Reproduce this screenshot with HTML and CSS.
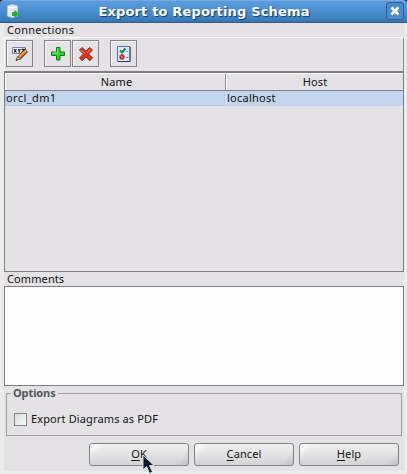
FILE: index.html
```html
<!DOCTYPE html>
<html lang="en">
<head>
<meta charset="utf-8">
<title>Export to Reporting Schema</title>
<link rel="stylesheet" href="styles.css">
</head>
<body>
<div class="window">
  <header class="titlebar">
    <svg class="app-icon" width="16" height="18" viewBox="0 0 16 18">
      <path d="M1.500 4Q6 1 11.500 4V14Q6 17 1.500 14Z" fill="#e3e9e8" stroke="#b5cbd9"/>
      <path d="M2 5Q6 7 11 5M2 9Q5 11 8 9" fill="none" stroke="#fff"/>
      <path d="M6 10h2.500V7.500l4.500 4.500-4.500 4.500V14H6z" fill="#2eae3a"/>
    </svg>
    <h1>Export to Reporting Schema</h1>
    <button class="close" aria-label="Close">
      <svg width="10" height="10" viewBox="0 0 10 10"><path d="M1.500 1.500L8.500 8.500M8.500 1.500L1.500 8.500" stroke="#fff" stroke-width="2.600"/></svg>
    </button>
  </header>
  <main class="content">
    <div class="label"><span class="t-connections">Connections</span></div>
    <div class="toolbar">
      <button class="tool" aria-label="Edit">
        <svg width="17" height="17" viewBox="0 0 17 17">
          <path d="M1.500 2.500h13v6h-13z" fill="#fff" stroke="#7481a8"/>
          <path d="M3 4l2.500 3.500M5.500 4L3 7.500M7 4l1.200 1.700L9.500 4M8.200 5.500v2.200M10.500 4.300h3L10.800 7.500" stroke="#101830" stroke-width="1.200" fill="none"/>
          <path d="M15.500 5.500L8 13" stroke="#593b18" stroke-width="4"/>
          <path d="M15 5.500L8 12.500" stroke="#eda638" stroke-width="2.400"/>
          <path d="M6.500 11.500L5 15.500l4.500-1.500z" fill="#f4d6a0" stroke="#4b3720" stroke-width=".8"/>
          <path d="M5 15.500l1.800-.6-1-1z" fill="#111"/>
        </svg>
      </button>
      <button class="tool add" aria-label="Add">
        <svg width="16" height="16" viewBox="0 0 16 16"><path d="M6.500 1.500h3.500V6h4.500v3.500H10v4.500H6.500V9.500H1.500V6h5z" fill="#2fd233" stroke="#087b13"/><path d="M7.500 2.500v4.500H2.500" fill="none" stroke="#80ee72"/></svg>
      </button>
      <button class="tool remove" aria-label="Remove">
        <svg width="16" height="16" viewBox="0 0 16 16"><path d="M4 1.500L8 5.300l3.500-3.800 3 2.500L10.500 8l4 4-2.800 2.700L8 10.800 4.300 14.700 1.500 12l4-4-4-4z" fill="#e2341f" stroke="#881c12"/><path d="M3 4l4 3.500M9 7l3.500-4" stroke="#ff8c65"/></svg>
      </button>
      <button class="tool options" aria-label="Select">
        <svg width="14" height="16" viewBox="0 0 14 16"><path d="M.5.500h12.500v15H.5z" fill="#dce8f3" stroke="#56749b"/><path d="M13 1v14.500H1" fill="none" stroke="#303e5a"/><path d="M3 4.500l2 2L8.500 2.500" fill="none" stroke="#168446" stroke-width="2"/><circle cx="5" cy="11" r="2.700" fill="#b92536"/><path d="M3.500 9.500l3 3m0-3l-3 3" stroke="#df8891" stroke-width=".7"/><path d="M9.500 5.500h1.500M9.500 11.500h1.500" stroke="#56749b"/></svg>
      </button>
    </div>
    <div class="table">
      <div class="row head"><div><span class="t-name">Name</span></div><div><span class="t-host">Host</span></div></div>
      <div class="row selected"><div><span class="t-orcl">orcl_dm1</span></div><div><span class="t-local">localhost</span></div></div>
    </div>
    <div class="label"><span class="t-comments">Comments</span></div>
    <div class="comments"></div>
    <section class="group">
      <h2>Options</h2>
      <div class="check"><i class="box"></i><span class="t-export">Export Diagrams as PDF</span></div>
    </section>
    <footer class="actions">
      <button class="action"><span><u>O</u>K</span></button>
      <button class="action"><span><u>C</u>ancel</span></button>
      <button class="action"><span><u>H</u>elp</span></button>
    </footer>
  </main>
  <svg class="pointer" width="14" height="22" viewBox="0 0 14 22"><path d="M1 1v15l3.500-3.500 3 7 3-1.500-3-6.500H12z" fill="#10182f" stroke="#f5f6f8" stroke-width=".8"/></svg>
</div>
</body>
</html>
```
FILE: styles.css
```css
* { box-sizing: border-box; }
body { margin: 0; background: #ececed; font: 11px/14px "Noto Sans", "Open Sans", sans-serif; color: #111; overflow: hidden; }
button { padding: 0; font: inherit; color: inherit; }
svg { display: block; }
.window { position: relative; width: 407px; height: 474px; background: linear-gradient(#14202e 6px, #ececed 6px); }
.titlebar { height: 23px; display: flex; align-items: center; padding: 0 3px 0 6px; border-top: 1px solid #76a9df; border-bottom: 1px solid #32587f; border-radius: 4px 4px 0 0; background: linear-gradient(#5b9bdc, #4a90d2 45%, #3c7fbd 85%, #3976ad); }
.titlebar h1 { flex: 1; margin: 0; text-align: center; font: bold 13px/20px "DejaVu Sans", sans-serif; letter-spacing: .16px; color: #fff; text-shadow: 1px 1px 1px #173c62; white-space: nowrap; }
.app-icon { margin-top: -1px; }
.close { width: 18px; height: 18px; margin-top: -1px; display: grid; place-items: center; border: 1px solid #285f98; border-radius: 3px; background: #4b8bc8; }
.content { margin: 0 3px 0 4px; height: 448px; background: #e4e2e5; }
.label { height: 14px; padding-left: 3px; white-space: nowrap; line-height: 14px; }
.t-connections { letter-spacing: .27px; }
.t-orcl { letter-spacing: .4px; }
.t-local { letter-spacing: .25px; }
.t-export { letter-spacing: .13px; }
.t-comments { letter-spacing: .1px; }
.toolbar { display: flex; height: 34px; padding: 2px 0 0 1px; border-top: 1px solid #fff; border-left: 1px solid #f7f7f7; border-right: 1px solid #8d8c90; }
.tool { width: 27px; height: 27px; display: grid; place-items: center; border: 1px solid #858488; box-shadow: inset 1px 1px #f5f4f6; background: #e4e2e5; }
.add { margin-left: 11px; }
.remove { margin-left: 1px; }
.options { margin-left: 11px; }
.table { height: 201px; border: 1px solid #7f7e82; border-top-width: 2px; }
.row { display: grid; grid-template-columns: 221px 1fr; white-space: nowrap; }
.head { height: 18px; border-bottom: 1px solid #7f7e82; line-height: 16px; text-align: center; }
.head div { border-top: 1px solid #fff; border-left: 1px solid #fff; }
.head div:first-child { border-right: 1px solid #8d8c90; padding-left: 2px; }
.head span { letter-spacing: .15px; }
.selected { height: 15px; background: #c3d5ec; line-height: 14px; }
.selected div { padding-left: 1px; }
.selected div:first-child { box-shadow: inset -1px -1px #a9caef, inset 1px 0 #a9caef; border-right: 1px solid #d8e2ee; }
.comments { height: 100px; border: 1px solid #7f7e82; background: #fcfefc; }
.group { position: relative; margin: 7px 2px 0; height: 43px; border: 1px solid #a0a0a4; }
.group h2 { position: absolute; left: 4px; top: -8px; margin: 0; padding: 0 2px; background: #e4e2e5; font-size: 11px; line-height: 14px; letter-spacing: -.1px; font-weight: bold; color: #555559; }
.check { display: flex; align-items: center; padding: 18px 0 0 7px; gap: 4px; white-space: nowrap; }
.box { width: 13px; height: 13px; border: 1px solid #85858a; background: linear-gradient(135deg, #dcdddd, #f6f6f6); }
.actions { display: flex; justify-content: flex-end; gap: 5px; padding: 7px 5px 0 0; }
.action { width: 100px; height: 23px; border: 1px solid #818286; border-radius: 3px; background: linear-gradient(135deg, #fff 0, transparent 14%, transparent 88%, #bfc5c8 100%), linear-gradient(#f0f0f1, #e3e3e4 50%, #d2d3d5); line-height: 20px; }
.action span { position: relative; top: -1px; letter-spacing: .1px; }
.action u { text-decoration-thickness: 1px; text-underline-offset: 2px; }
.pointer { position: absolute; left: 142px; top: 454px; }
```
